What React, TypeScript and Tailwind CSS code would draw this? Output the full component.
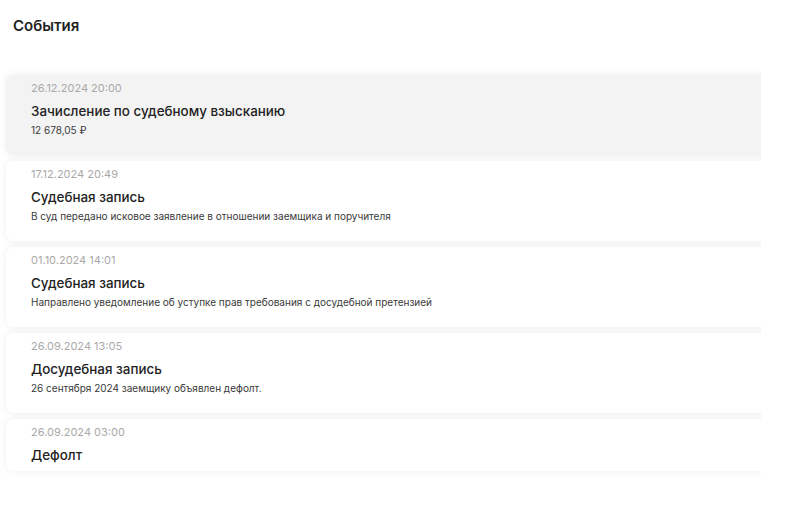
const events: EventItem[] = [
  {
    id: 1,
    date: "26.12.2024 20:00",
    title: "Зачисление по судебному взысканию",
    description: "12 678,05 ₽",
    active: true,
  },
  {
    id: 2,
    date: "17.12.2024 20:49",
    title: "Судебная запись",
    description: "В суд передано исковое заявление в отношении заемщика и поручителя",
  },
  {
    id: 3,
    date: "01.10.2024 14:01",
    title: "Судебная запись",
    description:
      "Направлено уведомление об уступке прав требования с досудебной претензией",
  },
  {
    id: 4,
    date: "26.09.2024 13:05",
    title: "Досудебная запись",
    description: "26 сентября 2024 заемщику объявлен дефолт.",
  },
  {
    id: 5,
    date: "26.09.2024 03:00",
    title: "Дефолт",
  },
];

type EventItem = {
  id: number;
  date: string;
  title: string;
  description?: string;
  active?: boolean;
};

export default function App() {
  return (
    <div className="min-h-[511px] w-[800px] bg-white font-['Inter',sans-serif] text-[#1f1f1f]">
      <h2 className="pl-[13px] pt-[16px] text-[15px] font-semibold leading-5">
        События
      </h2>
      {/* list is clipped on the right, cards run past the edge */}
      <div className="mt-[29px] w-[761px] overflow-hidden py-[10px]">
        <div className="flex w-[820px] flex-col gap-[6px] pl-[6px]">
          {events.map((event) => (
            <EventCard key={event.id} event={event} />
          ))}
        </div>
      </div>
    </div>
  );
}

function EventCard({ event }: { event: EventItem }) {
  return (
    <div
      className={`flex flex-col rounded-l-lg pl-[25px] pt-[5px] shadow-[0_0_8px_rgba(0,0,0,0.07)] ${
        event.description ? "h-[80px]" : "h-[52px]"
      } ${event.active ? "bg-[#f3f3f3]" : "bg-white"}`}
    >
      <span className="text-[11px] leading-4 text-[#a9a9a9]">{event.date}</span>
      <span className="mt-[5px] text-[13.4px] font-medium leading-5 text-[#222]">
        {event.title}
      </span>
      <span className="mt-[2px] text-[10px] leading-[14px] text-[#3a3a3a]">
        {event.description}
      </span>
    </div>
  );
}
